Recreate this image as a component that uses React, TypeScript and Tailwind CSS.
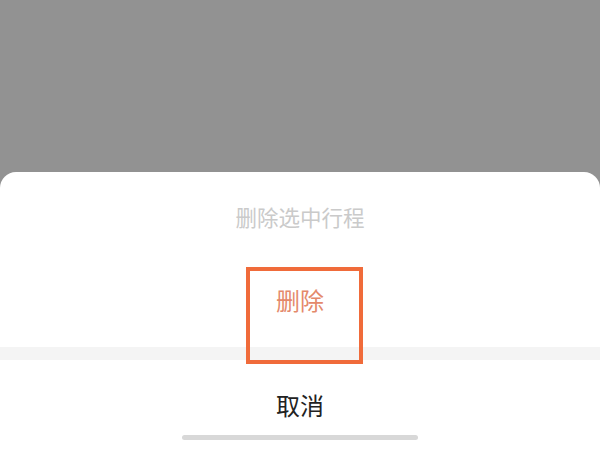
export default function App() {
  const cjk = { fontFamily: '"Noto Sans CJK SC", "Noto Sans", sans-serif' };

  return (
    <div className="flex h-[450px] w-[600px] flex-col overflow-hidden bg-[#929292]" style={cjk}>
      <div className="h-[172px] shrink-0" />
      <div className="flex flex-1 flex-col rounded-t-[16px] bg-white">
        <div className="flex h-[86px] items-center justify-center pt-[4px]">
          <span className="text-[21.5px] leading-none text-[#cacaca]">删除选中行程</span>
        </div>
        <div className="relative flex h-[89px] items-center justify-center pb-[6px]">
          <span className="text-[24px] leading-none text-[#e4896b]">删除</span>
          <div className="absolute left-[246px] top-[9px] z-10 h-[97px] w-[117px] border-[4px] border-[#f06b3a]" />
        </div>
        <div className="h-[13px] bg-[#f4f4f4]" />
        <div className="flex flex-1 flex-col items-center pt-[31px]">
          <span className="text-[24px] leading-[28px] text-[#222222]">取消</span>
          <div className="mt-[16px] h-[5px] w-[236px] rounded-full bg-[#d8d8d8]" />
        </div>
      </div>
    </div>
  );
}
